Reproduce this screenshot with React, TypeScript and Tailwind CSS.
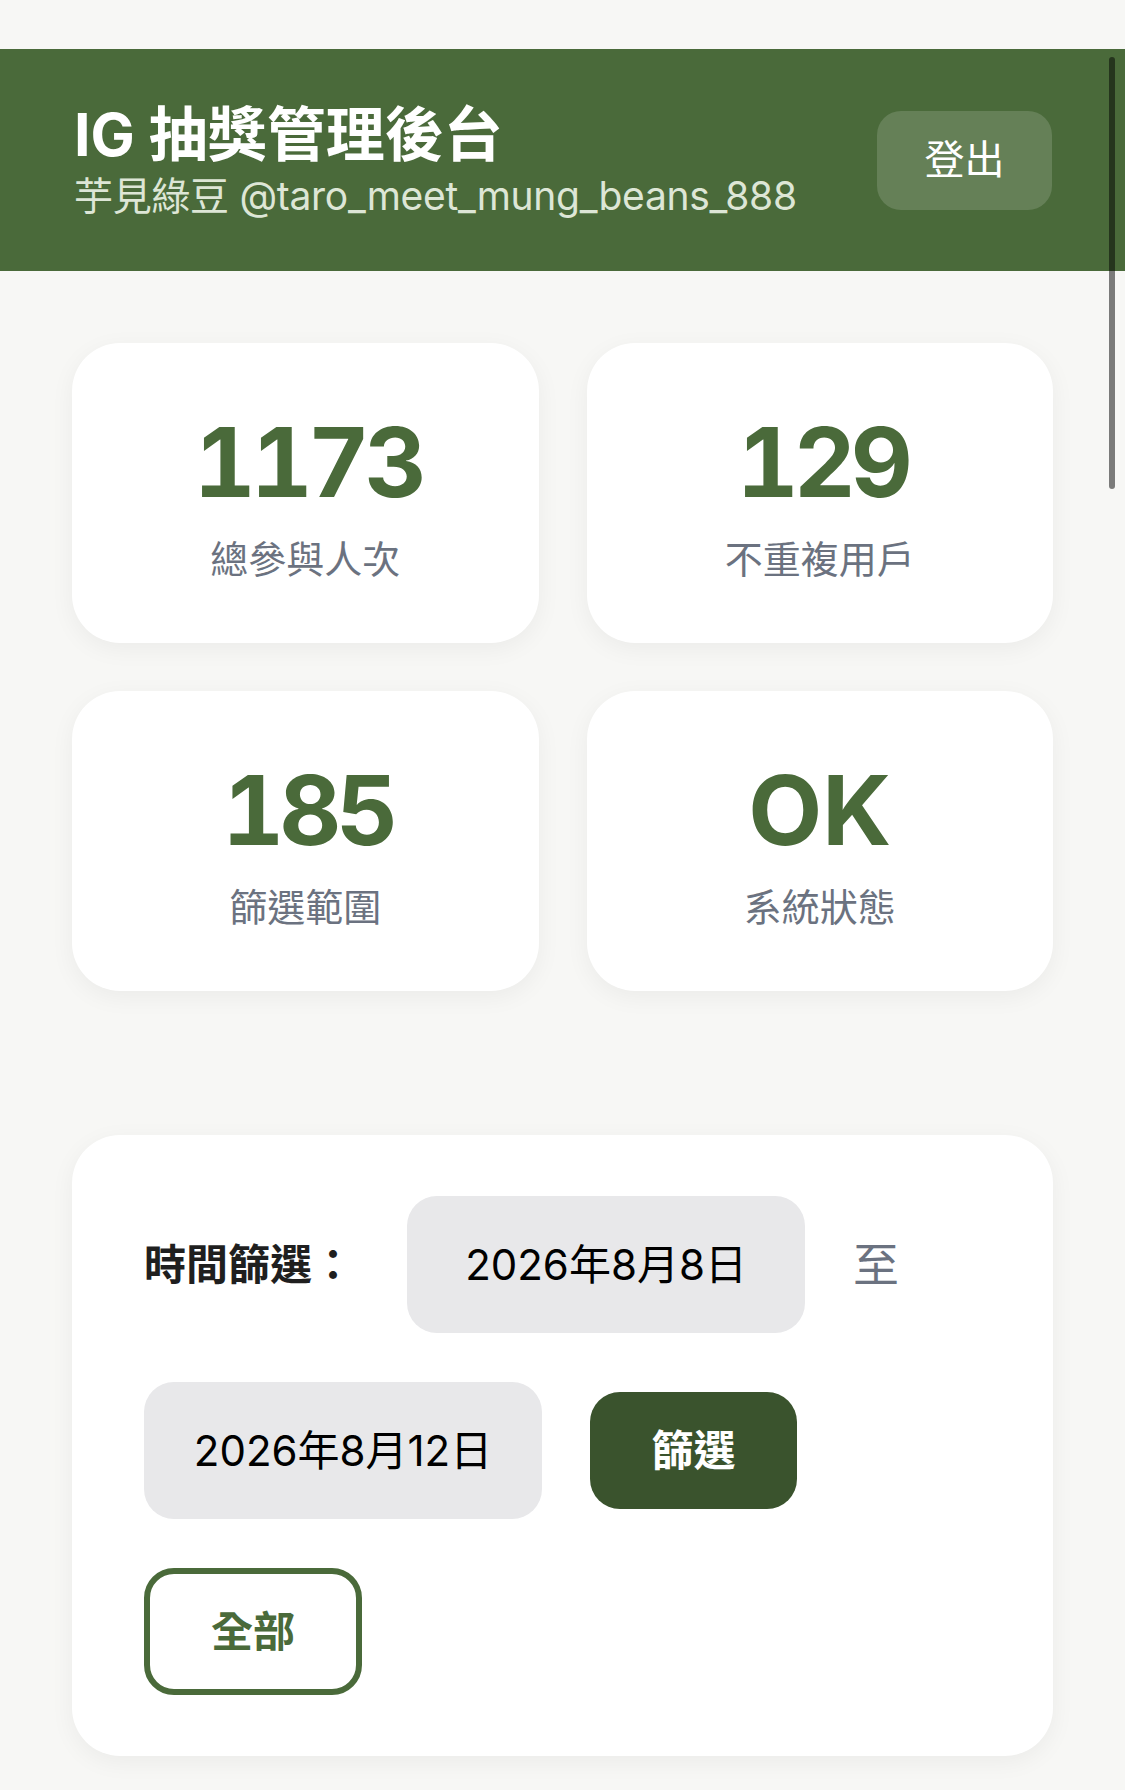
const stats = [
  { value: "1173", label: "總參與人次" },
  { value: "129", label: "不重複用戶" },
  { value: "185", label: "篩選範圍" },
  { value: "OK", label: "系統狀態" },
];

function StatCard({ value, label }: { value: string; label: string }) {
  const isNumber = /^\d+$/.test(value);
  return (
    <div className="h-[300px] rounded-[48px] bg-white pt-[71px] flex flex-col items-center shadow-[0_6px_24px_rgba(0,0,0,0.05)]">
      <div
        className={`text-[96px] leading-[96px] font-bold text-[#4a6a3a] ${
          isNumber ? "tabular-nums tracking-[-5px] pl-[5px]" : ""
        }`}
      >
        {value}
      </div>
      <div className="mt-[23px] text-[38px] leading-[52px] text-[#6b7280]">
        {label}
      </div>
    </div>
  );
}

export default function App() {
  return (
    <div className="relative min-h-[1790px] bg-[#f7f7f5] pt-[49px] font-['Inter','Noto_Sans_CJK_TC',sans-serif]">
      {/* 上方標題列 */}
      <header className="h-[222px] bg-[#4a6a3a] px-[74px] pr-[73px] flex items-center justify-between">
        <div>
          <h1 className="text-[59px] leading-[72px] font-bold text-white">
            IG 抽獎管理後台
          </h1>
          <p className="text-[39px] leading-[50px] tracking-[-0.3px] text-[#dde6d6]">
            芋見綠豆 @taro_meet_mung_beans_888
          </p>
        </div>
        <button className="w-[175px] h-[99px] rounded-[24px] bg-white/15 text-[40px] text-white">
          登出
        </button>
      </header>

      {/* 統計卡片 */}
      <div className="mt-[72px] px-[72px] grid grid-cols-2 gap-[48px]">
        {stats.map((s) => (
          <StatCard key={s.label} value={s.value} label={s.label} />
        ))}
      </div>

      {/* 時間篩選 */}
      <div className="mt-[144px] mx-[72px] rounded-[48px] bg-white px-[72px] py-[61px] shadow-[0_6px_24px_rgba(0,0,0,0.05)]">
        <div className="flex flex-wrap items-center gap-x-[48px] gap-y-[49px]">
          <span className="mr-[5px] text-[42px] font-bold text-[#1f1f1f]">時間篩選：</span>
          <div className="w-[398px] h-[137px] rounded-[30px] bg-[#e8e8ea] flex items-center justify-center text-[42px] text-black">
            2026年8月8日
          </div>
          <span className="text-[46px] text-[#6b7280]">至</span>
          <div className="w-[398px] h-[137px] rounded-[30px] bg-[#e8e8ea] flex items-center justify-center text-[42px] text-black">
            2026年8月12日
          </div>
          <button className="w-[207px] h-[117px] rounded-[30px] bg-[#3a532d] text-[42px] font-bold text-white">
            篩選
          </button>
          <button className="w-[218px] h-[127px] rounded-[30px] border-[6px] border-[#4a6a3a] bg-white text-[42px] font-bold text-[#4a6a3a]">
            全部
          </button>
        </div>
      </div>

      {/* 捲軸 */}
      <div className="absolute right-[10px] top-[57px] w-[6px] h-[432px] rounded-full bg-black/50" />
    </div>
  );
}
